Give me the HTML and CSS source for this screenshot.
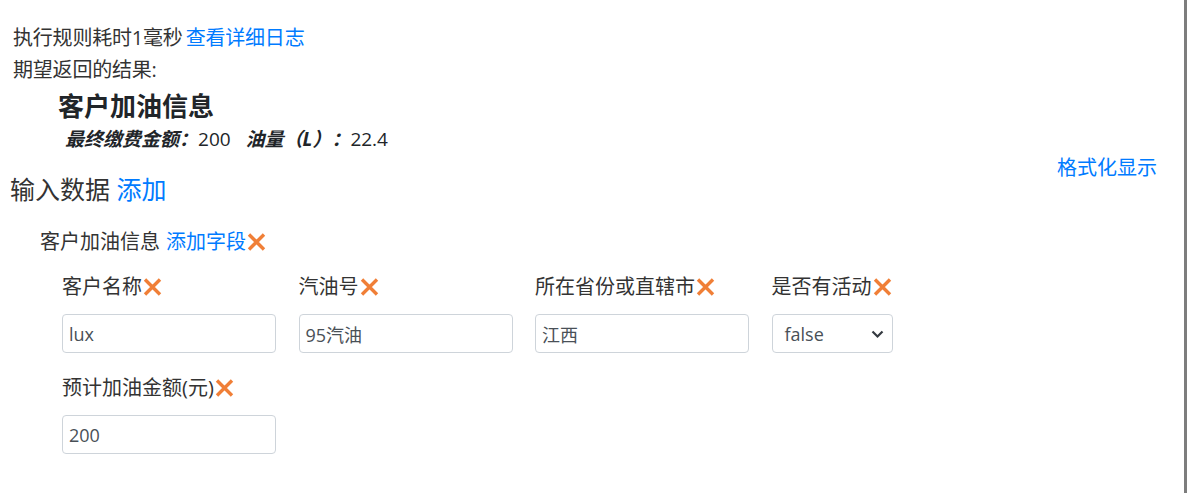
FILE: index.html
```html
<!DOCTYPE html>
<html lang="zh-CN">
<head>
<meta charset="utf-8">
<title>规则测试</title>
<link rel="stylesheet" href="styles.css">
</head>
<body>
<div class="page">
  <div class="line">执行规则耗时1毫秒<a class="link gap" href="#">查看详细日志</a></div>
  <div class="line">期望返回的结果:</div>
  <div class="result-title">客户加油信息</div>
  <div class="result-info">
    <b class="k">最终缴费金额：</b><span class="v">200</span>
    <b class="k">油量（L）：</b><span class="v">22.4</span>
  </div>
  <a class="format link" href="#">格式化显示</a>
  <h4 class="section">输入数据 <a class="link" href="#">添加</a></h4>
  <div class="group">
    <div class="group-label">客户加油信息<a class="link gap2" href="#">添加字段</a><svg class="x" viewBox="0 0 18 18"><path d="M1.5 1.5L16.5 16.5M16.5 1.5L1.5 16.5"/></svg></div>
    <div class="fields">
      <div class="field">
        <div class="label">客户名称<svg class="x" viewBox="0 0 18 18"><path d="M1.5 1.5L16.5 16.5M16.5 1.5L1.5 16.5"/></svg></div>
        <div class="input">lux</div>
      </div>
      <div class="field">
        <div class="label">汽油号<svg class="x" viewBox="0 0 18 18"><path d="M1.5 1.5L16.5 16.5M16.5 1.5L1.5 16.5"/></svg></div>
        <div class="input">95汽油</div>
      </div>
      <div class="field">
        <div class="label">所在省份或直辖市<svg class="x" viewBox="0 0 18 18"><path d="M1.5 1.5L16.5 16.5M16.5 1.5L1.5 16.5"/></svg></div>
        <div class="input">江西</div>
      </div>
      <div class="field">
        <div class="label">是否有活动<svg class="x" viewBox="0 0 18 18"><path d="M1.5 1.5L16.5 16.5M16.5 1.5L1.5 16.5"/></svg></div>
        <div class="input select"><span>false</span><svg class="chev" viewBox="0 0 14 10"><path d="M2 2.5L7 7.5L12 2.5"/></svg></div>
      </div>
      <div class="field">
        <div class="label">预计加油金额(元)<svg class="x" viewBox="0 0 18 18"><path d="M1.5 1.5L16.5 16.5M16.5 1.5L1.5 16.5"/></svg></div>
        <div class="input">200</div>
      </div>
    </div>
  </div>
  <h4 class="section">期望返回的结果</h4>
</div>
</body>
</html>
```
FILE: styles.css
```css
* { box-sizing: border-box; }
html, body { margin: 0; padding: 0; background: #fff; overflow: hidden; }
body {
  font-family: "Open Sans", "Noto Sans CJK SC", sans-serif;
  color: #212529;
  font-size: 20px;
}
.page {
  height: 493px;
  padding: 22px 27px 0 10px;
  border-right: 3px solid #7d7d7d;
  overflow: hidden;
}
.link { color: #007bff; text-decoration: none; }
.gap { margin-left: 3px; }
.gap2 { margin-left: 6px; }
.line { line-height: 32px; padding-left: 3px; color: #333; letter-spacing: -0.2px; }
.result-title {
  font-size: 26px; font-weight: 700; line-height: 40px; padding-left: 48px; color: #212529;
}
.result-info { line-height: 26px; padding-left: 55px; font-size: 19px; }
.result-info .k { font-style: italic; font-weight: 700; }
.result-info .v { margin-right: 10px; }
.format { float: right; line-height: 24px; margin-top: 4px; }
.section {
  margin: 19px 0 0; font-size: 25px; font-weight: 400; line-height: 36px; color: #333;
}
.group { padding-left: 30px; }
.group-label { margin-top: 20px; line-height: 30px; display: flex; align-items: center; color: #333; }
.x { width: 19px; height: 18px; margin-left: 1px; fill: none; stroke: #f07f37; stroke-width: 3.4; stroke-linecap: butt; flex: none; }
.fields {
  display: grid;
  grid-template-columns: repeat(4, 214px);
  column-gap: 22.5px;
  row-gap: 20px;
  padding-left: 22px;
  margin-top: 15px;
}
.label { line-height: 30px; display: flex; align-items: center; color: #333; }
.input {
  margin-top: 12px;
  height: 39px;
  border: 1px solid #ced4da;
  border-radius: 4px;
  padding: 0 6px;
  display: flex; align-items: center;
  font-size: 18px; color: #495057;
}
.select { width: 121px; justify-content: space-between; padding: 0 7px 0 12px; }
.chev { width: 15px; height: 10px; fill: none; stroke: #343a40; stroke-width: 2.2; }
.section:last-child { margin-top: 33px; }
```
